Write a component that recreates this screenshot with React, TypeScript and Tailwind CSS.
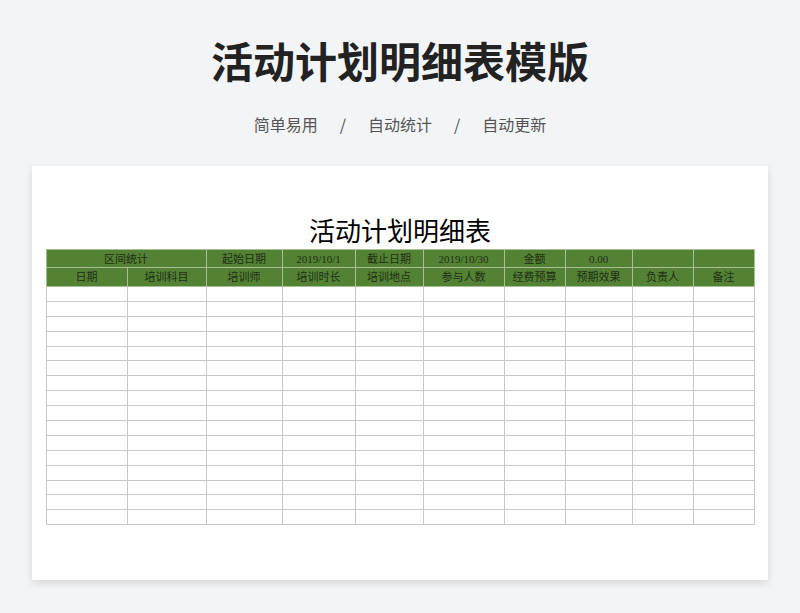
export default function App() {
  const widths = [81, 79, 76, 73, 68, 81, 61, 67, 61, 61];
  const heads = ["日期", "培训科目", "培训师", "培训时长", "培训地点", "参与人数", "经费预算", "预期效果", "负责人", "备注"];
  const row1: [string, number][] = [["区间统计", 2], ["起始日期", 1], ["2019/10/1", 1], ["截止日期", 1], ["2019/10/30", 1], ["金额", 1], ["0.00", 1], ["", 1], ["", 1]];
  const rows = Array.from({ length: 16 });
  const font = { fontFamily: '"Liberation Serif", "Noto Sans CJK SC", serif' };
  return (
    <div className="w-[800px] h-[613px] bg-[#f3f4f6] flex flex-col items-center" style={{ fontFamily: '"Noto Sans CJK SC", sans-serif' }}>
      <div className="mt-[33px] h-[54px] text-[42px] leading-[54px] font-bold text-[#222]">活动计划明细表模版</div>
      <div className="mt-[25px] h-[24px] text-[16px] leading-[24px] text-[#555] flex gap-[22px]">
        <span>简单易用</span><span>/</span><span>自动统计</span><span>/</span><span>自动更新</span>
      </div>
      <div className="mt-[30px] w-[736px] h-[414px] bg-white shadow-[0_3px_8px_rgba(0,0,0,0.12)] flex flex-col items-center">
        <div className="mt-[50px] h-[33px] text-[26px] leading-[33px] text-black" style={font}>活动计划明细表</div>
        <table className="border-collapse table-fixed text-[11px]" style={font}>
          <colgroup>{widths.map((w, i) => <col key={i} style={{ width: w }} />)}</colgroup>
          <tbody>
            <tr className="h-[18px]">
              {row1.map(([t, s], i) => (
                <td key={i} colSpan={s} className="bg-[#548235] border border-[#a8bf93] text-center text-[#1e2f12] p-0 leading-[16px]">{t}</td>
              ))}
            </tr>
            <tr className="h-[19px]">
              {heads.map((t, i) => (
                <td key={i} className="bg-[#548235] border border-[#a8bf93] text-center text-[#1e2f12] p-0 leading-[17px]">{t}</td>
              ))}
            </tr>
            {rows.map((_, r) => (
              <tr key={r} className="h-[14.9px]">
                {widths.map((_, i) => <td key={i} className="border border-[#c8c8c8] p-0" />)}
              </tr>
            ))}
          </tbody>
        </table>
      </div>
    </div>
  );
}
